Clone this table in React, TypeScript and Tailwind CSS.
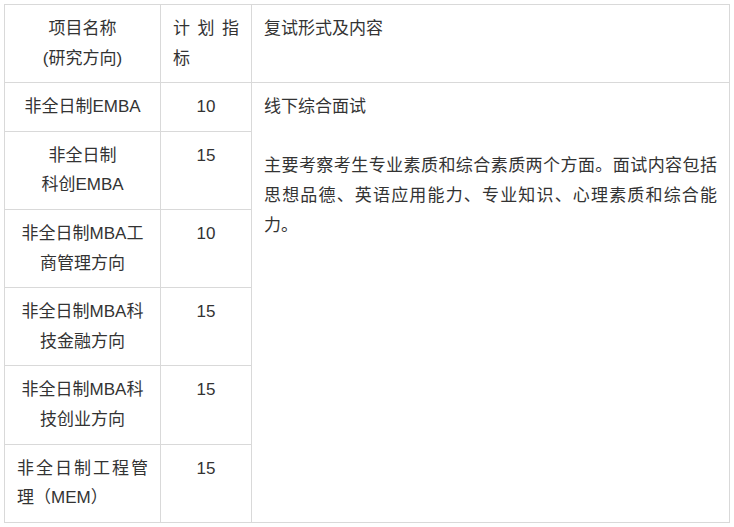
const rows = [
  { name: <>非全日制EMBA</>, count: '10' },
  { name: <>非全日制<br />科创EMBA</>, count: '15' },
  { name: <>非全日制MBA工商管理方向</>, count: '10' },
  { name: <>非全日制MBA科技金融方向</>, count: '15' },
  { name: <>非全日制MBA科技创业方向</>, count: '15' },
];

export default function App() {
  const cell = 'border border-[#d9d9d9] px-3 py-[9px] align-top';

  return (
    <div
      className="bg-white pt-1 pl-1 text-[17px] leading-[29.6px] text-[#333]"
      style={{ fontFamily: '"Liberation Sans", "Noto Sans CJK SC", sans-serif' }}
    >
      <table className="w-[726px] table-fixed border-collapse">
        <colgroup>
          <col className="w-[156px]" />
          <col className="w-[91px]" />
          <col />
        </colgroup>
        <tbody>
          <tr>
            <td className={`${cell} text-center`}>
              项目名称
              <br />
              (研究方向)
            </td>
            <td className={`${cell} text-justify`}>计划指标</td>
            <td className={`${cell} text-left`}>复试形式及内容</td>
          </tr>
          {rows.map((r, i) => (
            <tr key={i}>
              <td className={`${cell} text-center`}>{r.name}</td>
              <td className={`${cell} text-center`}>{r.count}</td>
              {i === 0 && (
                <td className={`${cell} text-left`} rowSpan={6}>
                  <p>线下综合面试</p>
                  <p>
                    <br />
                  </p>
                  <p className="text-justify">
                    主要考察考生专业素质和综合素质两个方面。面试内容包括思想品德、英语应用能力、专业知识、心理素质和综合能力。
                  </p>
                </td>
              )}
            </tr>
          ))}
          <tr>
            <td className={`${cell} text-justify`}>非全日制工程管理（MEM）</td>
            <td className={`${cell} text-center`}>15</td>
          </tr>
        </tbody>
      </table>
    </div>
  );
}
